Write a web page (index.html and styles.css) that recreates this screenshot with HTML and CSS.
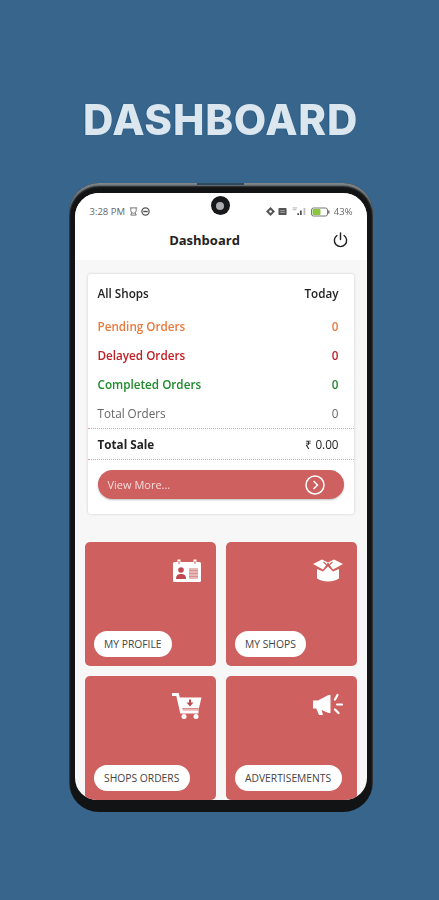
FILE: index.html
```html
<!DOCTYPE html>
<html lang="en">
<head>
<meta charset="utf-8">
<title>Dashboard</title>
<link rel="stylesheet" href="styles.css">
</head>
<body>
<main class="poster">
  <h1 class="headline">DASHBOARD</h1>
  <div class="phone">
    <div class="notch-line"></div>
    <div class="camera"><span class="lens"></span></div>
    <div class="screen">
      <div class="status">
        <div class="status-side">
          <span>3:28 PM</span>
          <svg class="st-ic" viewBox="0 0 10 10"><path d="M1 1h8M2 1v3a3 3 0 0 0 6 0V1M2 9h6M3 6.500l-1 2.500M7 6.500l1 2.500" fill="none" stroke="#777" stroke-width="1.100"/></svg>
          <svg class="st-ic" viewBox="0 0 10 10"><circle cx="5" cy="5" r="4" fill="none" stroke="#555" stroke-width="1.400"/><path d="M2.500 5h5" stroke="#555" stroke-width="1.400"/></svg>
        </div>
        <div class="status-side">
          <svg class="st-ic" viewBox="0 0 10 10"><path d="M5 0l5 5-5 5-5-5z" fill="#555"/><circle cx="5" cy="5" r="1.500" fill="#fff"/></svg>
          <svg class="st-ic" viewBox="0 0 10 10"><rect x=".5" y="1" width="9" height="8" rx="1" fill="#555"/><path d="M2.500 4h5M2.500 6h5" stroke="#aaa"/></svg>
          <svg class="st-sig" viewBox="0 0 17 10"><path d="M1 1h5M1 3h4" stroke="#aaa"/><path d="M6 9h2V7H6zM9 9h2V4H9z" fill="#555"/><path d="M13 9h2V1h-2z" fill="#bbb"/></svg>
          <svg class="st-bat" viewBox="0 0 19 10"><rect x=".5" y="1" width="16" height="8" rx="2" fill="none" stroke="#777"/><rect x="1.500" y="2" width="8" height="6" rx="1" fill="#8cc63f"/><rect x="17" y="3.500" width="1.500" height="3" fill="#777"/></svg>
          <span>43%</span>
        </div>
      </div>
      <header class="appbar">
        <h2 class="appbar-title">Dashboard</h2>
        <svg class="power" viewBox="0 0 18 18"><path d="M9 1.500v7M5.200 4.200a6.500 6.500 0 1 0 7.600 0" fill="none" stroke="#222" stroke-width="1.500" stroke-linecap="round"/></svg>
      </header>
      <div class="content">
        <section class="card">
          <div class="row row-head"><span>All Shops</span><span>Today</span></div>
          <div class="row row-stat pending"><span>Pending Orders</span><span>0</span></div>
          <div class="row row-stat delayed"><span>Delayed Orders</span><span>0</span></div>
          <div class="row row-stat completed"><span>Completed Orders</span><span>0</span></div>
          <div class="row row-stat total"><span>Total Orders</span><span>0</span></div>
          <div class="row row-sale"><span>Total Sale</span><span class="amount">₹ 0.00</span></div>
          <div class="more">
            <span>View More...</span>
            <svg class="more-ic" viewBox="0 0 20 20"><circle cx="10" cy="10" r="9" fill="none" stroke="#fff" stroke-width="1.500"/><path d="M8.500 6l4 4-4 4" fill="none" stroke="#fff" stroke-width="1.500"/></svg>
          </div>
        </section>
        <div class="tiles">
          <article class="tile">
            <svg class="tile-ic" viewBox="0 0 30 24"><rect x="1" y="3" width="28" height="20" rx="1.500" fill="#fff"/><path d="M7 .500v5M23 .500v5" stroke="#fff" stroke-width="3"/><path d="M7 2v3M23 2v3" stroke="#cf6060"/><circle cx="9" cy="11" r="2.800" fill="#c2474f"/><path d="M4 20c0-4 2-5 5-5s5 1 5 5z" fill="#c2474f"/><rect x="17" y="9" width="9" height="11" fill="#e7b7b7"/><path d="M17 11.500h9M17 14.500h9M17 17.500h9" stroke="#d68f8f"/></svg>
            <span class="pill">MY PROFILE</span>
          </article>
          <article class="tile">
            <svg class="tile-ic" viewBox="0 0 30 24"><path d="M0 5L9 .500l6 3-5 7zM30 5L21 .500l-6 3 5 7z" fill="#fff"/><path d="M4 10l6 2.500 5-5 5 5 6-2.500v9.500c-3 2-7 3-11 3s-8-1-11-3z" fill="#fff"/><path d="M10.500 3l4.500 4 4.500-4" fill="none" stroke="#cf6060" stroke-width="1.200"/></svg>
            <span class="pill">MY SHOPS</span>
          </article>
          <article class="tile">
            <svg class="tile-ic tile-ic-cart" viewBox="0 0 30 26"><path d="M0 1.500h5.500l4 17.500h17" fill="none" stroke="#fff" stroke-width="3"/><path d="M7 4.500h22.500l-2.500 10.500H9z" fill="#fff"/><rect x="9" y="15.500" width="18" height="2" fill="#fff" opacity=".55"/><circle cx="12" cy="23.500" r="2.500" fill="#fff"/><circle cx="24" cy="23.500" r="2.500" fill="#fff"/><path d="M18 6.500v3.500" stroke="#c2474f" stroke-width="2"/><path d="M14.500 9.500h7L18 13.500z" fill="#c2474f"/></svg>
            <span class="pill">SHOPS ORDERS</span>
          </article>
          <article class="tile">
            <svg class="tile-ic" viewBox="0 0 30 24"><path d="M0 7.500h5L15.500 2h2v18h-2L5 15.500H0z" fill="#fff"/><path d="M3 15h5l2 7H6z" fill="#fff"/><path d="M22 6.500L24.500 2M24 11.500h5M22 16.500l3.500 3.500" stroke="#fff" stroke-width="2.200" stroke-linecap="round"/></svg>
            <span class="pill">ADVERTISEMENTS</span>
          </article>
        </div>
      </div>
    </div>
  </div>
</main>
</body>
</html>
```
FILE: styles.css
```css
* { box-sizing: border-box; }
html, body { margin: 0; height: 100%; }
body { background: #38658c; font-family: "Open Sans", "Liberation Sans", sans-serif; overflow: hidden; }
.poster { width: 439px; height: 900px; display: flex; flex-direction: column; align-items: center; padding: 92px 0 0 2px; }
.headline { margin: 0; height: 91px; font-family: Inter, "Open Sans", sans-serif; font-weight: 800; font-size: 42px; line-height: 55px; letter-spacing: .8px; color: #dbe6ee; text-shadow: -1px 0 1px #1f5a85; filter: blur(.3px); }
.phone { position: relative; width: 304px; height: 629px; padding: 10px 6px 12px; background: #121314; border-radius: 30px 30px 30px 30px; box-shadow: inset 0 3px 2px #80868a; filter: blur(.35px); }
.notch-line { position: absolute; left: 128px; top: 0; width: 47px; height: 2px; background: #2e4a60; }
.camera { position: absolute; left: 142px; top: 13px; width: 19px; height: 19px; border-radius: 50%; background: #16181a; display: flex; align-items: center; justify-content: center; }
.lens { width: 8px; height: 8px; border-radius: 50%; background: #a9adaf; }
.screen { height: 100%; background: #f7f7f7; border-radius: 24px 24px 22px 22px; overflow: hidden; display: flex; flex-direction: column; }
.status { height: 33px; flex: none; background: #fff; padding: 4px 14px 0 15px; display: flex; align-items: center; justify-content: space-between; font-size: 9.500px; color: #666; }
.status-side { display: flex; align-items: center; gap: 3.500px; }
.st-ic { width: 9px; height: 9px; }
.st-sig { width: 17px; height: 9px; }
.st-bat { width: 19px; height: 10px; }
.appbar { height: 34px; flex: none; background: #fff; display: flex; align-items: center; justify-content: center; position: relative; padding: 0 32px 7px 0; }
.appbar-title { margin: 0; font-size: 13px; font-weight: 700; color: #222; }
.power { position: absolute; right: 18px; top: 5px; width: 17px; height: 18px; }
.content { padding: 14px 10px 0; flex: 1; }
.card { margin: 0 3px; height: 240px; background: #fff; border-radius: 3px; box-shadow: 0 0 3px rgba(0,0,0,.18); display: flex; flex-direction: column; padding-top: 5px; }
.row { display: flex; justify-content: space-between; align-items: center; padding: 0 15px 0 10px; font-size: 11.700px; }
.row-head { height: 28px; margin-bottom: 5px; font-weight: 600; color: #222; }
.row-stat { height: 28.700px; font-weight: 600; }
.pending { color: #e8793f; }
.delayed { color: #c01d24; }
.completed { color: #1f8a2c; }
.total { color: #666; font-weight: 400; height: 29px; }
.row-sale { height: 32px; margin-top: 1px; font-weight: 700; color: #222; border-top: 1px dotted #d9a0a5; border-bottom: 1px dotted #d9a0a5; }
.amount { font-weight: 400; }
.more { margin: 10px 10px 0; height: 29px; border-radius: 15px; background: #cf6060; color: #f3dcdc; font-size: 11px; display: flex; align-items: center; justify-content: space-between; padding: 0 19px 0 10px; box-shadow: 0 1px 2px rgba(0,0,0,.25); }
.more-ic { width: 20px; height: 20px; }
.tiles { margin-top: 28px; display: grid; grid-template-columns: 131px 131px; grid-auto-rows: 124px; gap: 10px; }
.tile { background: #cf6060; border-radius: 5px; padding: 17px 14px 9px 9px; display: flex; flex-direction: column; justify-content: space-between; align-items: flex-start; }
.tile-ic { width: 30px; height: 24px; align-self: flex-end; }
.tile-ic-cart { height: 26px; }
.pill { height: 26px; padding: 0 10.500px; border-radius: 13px; background: #fff; color: #444; font-size: 10.300px; display: flex; align-items: center; white-space: nowrap; }
```
